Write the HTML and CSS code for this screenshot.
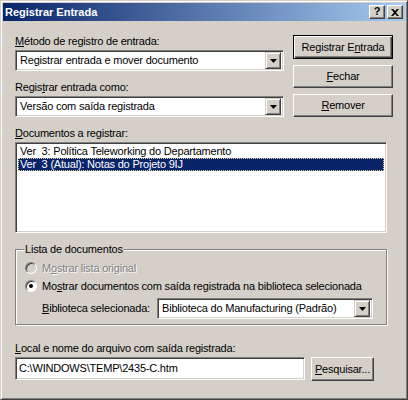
FILE: index.html
```html
<!DOCTYPE html>
<html lang="pt">
<head>
    <meta charset="UTF-8">
    <title>Registrar Entrada</title>
    <link rel="stylesheet" href="styles.css">
</head>
<body>
    <div class="window">
        <div class="titlebar">
            <span class="title">Registrar Entrada</span>
            <div class="caption-btns">
                <span class="cap-btn help">?</span>
                <span class="cap-btn">
                    <svg width="8" height="7" viewBox="0 0 8 7"><path d="M0 0h2l2 2 2-2h2L5 3.5 8 7H6L4 5 2 7H0l3-3.5z" fill="#000"/></svg>
                </span>
            </div>
        </div>

        <div class="content">
            <div class="top">
                <div class="fields">
                    <div class="lbl"><u>M</u>étodo de registro de entrada:</div>
                    <div class="combo">
                        <span class="combo-text">Registrar entrada e mover documento</span>
                        <span class="drop"><svg width="7" height="4" viewBox="0 0 7 4"><path d="M0 0h7L3.5 4z" fill="#000"/></svg></span>
                    </div>
                    <div class="lbl second">Regis<u>t</u>rar entrada como:</div>
                    <div class="combo">
                        <span class="combo-text">Versão com saída registrada</span>
                        <span class="drop"><svg width="7" height="4" viewBox="0 0 7 4"><path d="M0 0h7L3.5 4z" fill="#000"/></svg></span>
                    </div>
                </div>
                <div class="actions">
                    <button class="btn default">Registrar E<u>n</u>trada</button>
                    <button class="btn"><u>F</u>echar</button>
                    <button class="btn"><u>R</u>emover</button>
                </div>
            </div>

            <div class="lbl list-lbl"><u>D</u>ocumentos a registrar:</div>
            <div class="listbox">
                <div class="item">Ver  3: Política Teleworking do Departamento</div>
                <div class="item selected">Ver  3 (Atual): Notas do Projeto 9IJ</div>
            </div>

            <fieldset class="group">
                <legend>Lista de documentos</legend>
                <div class="radio-row disabled">
                    <span class="radio"></span>
                    <span>M<u>o</u>strar lista original</span>
                </div>
                <div class="radio-row">
                    <span class="radio checked"></span>
                    <span>Mo<u>s</u>trar documentos com saída registrada na biblioteca selecionada</span>
                </div>
                <div class="library-row">
                    <span class="library-lbl"><u>B</u>iblioteca selecionada:</span>
                    <div class="combo small">
                        <span class="combo-text">Biblioteca do Manufacturing (Padrão)</span>
                        <span class="drop"><svg width="7" height="4" viewBox="0 0 7 4"><path d="M0 0h7L3.5 4z" fill="#000"/></svg></span>
                    </div>
                </div>
            </fieldset>

            <div class="lbl footer-lbl"><u>L</u>ocal e nome do arquivo com saída registrada:</div>
            <div class="footer-row">
                <div class="textbox">C:\WINDOWS\TEMP\2435-C.htm</div>
                <button class="btn browse"><u>P</u>esquisar...</button>
            </div>
        </div>
    </div>
</body>
</html>
```

FILE: styles.css
```css
html, body {
    margin: 0;
    padding: 0;
    background: #d4d0c8;
}
body {
    font-family: "Liberation Sans", Arial, sans-serif;
    font-size: 11px;
    line-height: 13px;
    letter-spacing: -0.2px;
    color: #000000;
}
u {
    text-decoration: underline;
    text-underline-offset: 1px;
}

/* janela */
.window {
    width: 408px;
    height: 400px;
    box-sizing: border-box;
    border: 1px solid;
    border-color: #d4d0c8 #404040 #404040 #d4d0c8;
    box-shadow: inset 1px 1px #ffffff, inset -1px -1px #808080;
    padding: 2px;
    background: #d4d0c8;
    display: flex;
    flex-direction: column;
}
.titlebar {
    height: 18px;
    flex: none;
    display: flex;
    align-items: center;
    justify-content: space-between;
    background: linear-gradient(to right, #0a246a, #a6caf0);
    padding: 0 2px 0 2px;
}
.title {
    color: #ffffff;
    font-weight: bold;
    font-size: 11px;
    letter-spacing: 0;
}
.caption-btns {
    display: flex;
    gap: 2px;
}
.cap-btn {
    width: 16px;
    height: 14px;
    box-sizing: border-box;
    background: #d4d0c8;
    border: 1px solid;
    border-color: #ffffff #404040 #404040 #ffffff;
    box-shadow: inset -1px -1px #808080;
    display: flex;
    align-items: center;
    justify-content: center;
}
.help {
    font-weight: bold;
    font-size: 11px;
    line-height: 11px;
    letter-spacing: 0;
    padding-bottom: 1px;
}

.content {
    flex: 1;
    padding: 14px 12px 0 12px;
}

/* topo: campos + botões */
.top {
    display: flex;
    gap: 9px;
}
.fields {
    width: 269px;
}
.lbl {
    height: 13px;
    white-space: nowrap;
}
.lbl.second {
    margin-top: 10px;
}
.combo {
    margin-top: 2px;
    height: 21px;
    box-sizing: border-box;
    background: #ffffff;
    border: 1px solid;
    border-color: #808080 #ffffff #ffffff #808080;
    box-shadow: inset 1px 1px #404040, inset -1px -1px #d4d0c8;
    display: flex;
    align-items: center;
    padding: 2px 2px 2px 4px;
}
.combo-text {
    flex: 1;
    white-space: nowrap;
    overflow: hidden;
}
.drop {
    width: 16px;
    height: 17px;
    box-sizing: border-box;
    background: #d4d0c8;
    border: 1px solid;
    border-color: #d4d0c8 #404040 #404040 #d4d0c8;
    box-shadow: inset 1px 1px #ffffff, inset -1px -1px #808080;
    display: flex;
    align-items: center;
    justify-content: center;
}
.actions {
    width: 100px;
    display: flex;
    flex-direction: column;
    gap: 6px;
}
.btn {
    font: inherit;
    letter-spacing: inherit;
    color: #000000;
    height: 23px;
    padding: 0;
    box-sizing: border-box;
    background: #d4d0c8;
    border: 1px solid;
    border-color: #ffffff #404040 #404040 #ffffff;
    box-shadow: inset -1px -1px #808080, inset 1px 1px #d4d0c8;
}
.btn.default {
    height: 24px;
    border: 1px solid #000000;
    box-shadow: inset 1px 1px #ffffff, inset -1px -1px #404040, inset -2px -2px #808080;
}

/* lista */
.list-lbl {
    margin-top: 10px;
}
.listbox {
    margin-top: 2px;
    width: 372px;
    height: 91px;
    box-sizing: border-box;
    background: #ffffff;
    border: 1px solid;
    border-color: #808080 #ffffff #ffffff #808080;
    box-shadow: inset 1px 1px #404040, inset -1px -1px #d4d0c8;
    padding: 2px;
}
.item {
    height: 13px;
    white-space: pre;
    padding-left: 1px;
    box-sizing: border-box;
    border: 1px solid transparent;
    line-height: 11px;
}
.item.selected {
    background: #0a246a;
    color: #ffffff;
    border: 1px dotted #e8d890;
}

/* grupo */
.group {
    margin: 10px 0 0 0;
    width: 372px;
    height: 82px;
    box-sizing: border-box;
    border: 1px solid #808080;
    box-shadow: inset 1px 1px #ffffff, 1px 1px #ffffff;
    padding: 3px 13px 0 9px;
}
.group legend {
    padding: 0 1px;
    margin-left: -1px;
    background: #d4d0c8;
}
.radio-row {
    display: flex;
    align-items: center;
    gap: 5px;
    height: 18px;
    white-space: nowrap;
}
.radio-row.disabled {
    color: #808080;
    text-shadow: 1px 1px #ffffff;
}
.radio {
    width: 12px;
    height: 12px;
    box-sizing: border-box;
    border-radius: 50%;
    border: 1px solid;
    border-color: #808080 #ffffff #ffffff #808080;
    box-shadow: inset 1px 1px #404040;
    background: #ffffff;
    flex: none;
    display: flex;
    align-items: center;
    justify-content: center;
}
.disabled .radio {
    background: #d4d0c8;
}
.radio.checked::after {
    content: "";
    width: 4px;
    height: 4px;
    border-radius: 50%;
    background: #000000;
}
.library-row {
    display: flex;
    align-items: center;
    margin-top: 3px;
    padding-left: 17px;
}
.library-lbl {
    white-space: nowrap;
}
.combo.small {
    margin: 0 0 0 auto;
    width: 216px;
    flex: none;
}

/* rodapé */
.footer-lbl {
    margin-top: 17px;
}
.footer-row {
    display: flex;
    gap: 6px;
    margin-top: 2px;
}
.textbox {
    width: 290px;
    height: 23px;
    box-sizing: border-box;
    background: #ffffff;
    border: 1px solid;
    border-color: #808080 #ffffff #ffffff #808080;
    box-shadow: inset 1px 1px #404040, inset -1px -1px #d4d0c8;
    padding: 4px 3px;
    white-space: nowrap;
}
.btn.browse {
    width: 63px;
    height: 24px;
}
```
